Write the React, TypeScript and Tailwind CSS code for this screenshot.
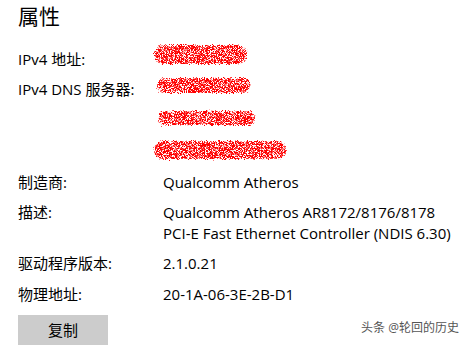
const font = { fontFamily: '"Open Sans", "Noto Sans CJK SC", sans-serif' };

// red marker scribble used to hide the addresses
function Scribble({ w, h, ml, mt, seed }: { w: number; h: number; ml: number; mt: number; seed: number }) {
  const id = `rough-${seed}`;
  return (
    <svg width={w} height={h} style={{ marginLeft: ml, marginTop: mt }} className="block">
      <defs>
        <filter id={id} x="-5%" y="-10%" width="110%" height="120%">
          <feTurbulence type="fractalNoise" baseFrequency="0.9" numOctaves="2" seed={seed} result="t" />
          <feDisplacementMap in="SourceGraphic" in2="t" scale="6" xChannelSelector="R" yChannelSelector="G" result="d" />
          <feTurbulence type="fractalNoise" baseFrequency="1.4" numOctaves="1" seed={seed + 3} result="n" />
          <feColorMatrix
            in="n"
            type="matrix"
            values="0 0 0 0 0  0 0 0 0 0  0 0 0 0 0  0 0 0 -7 4.3"
            result="m"
          />
          <feComposite in="d" in2="m" operator="in" />
        </filter>
      </defs>
      <rect x="2" y="2" width={w - 4} height={h - 4} rx={(h - 4) / 2} fill="#ff0000" filter={`url(#${id})`} />
    </svg>
  );
}

export default function App() {
  return (
    <div className="w-[470px] h-[351px] bg-white relative overflow-hidden text-black pl-[18px]" style={font}>
      {/* Title */}
      <h1 className="text-[21px] leading-[28px] pt-[2px] font-normal">属性</h1>

      <div className="mt-[19px] grid grid-cols-[145px_1fr] text-[15px] leading-[21px]">
        <div>IPv4 地址:</div>
        <div className="h-[21px]">
          <Scribble w={97} h={23} ml={-11} mt={-6} seed={2} />
        </div>

        <div className="mt-[9px]">IPv4 DNS 服务器:</div>
        <div className="mt-[9px] flex flex-col">
          <Scribble w={97} h={19} ml={-8} mt={-3} seed={5} />
          <Scribble w={101} h={18} ml={-7} mt={14} seed={8} />
          <Scribble w={136} h={22} ml={-11} mt={12} seed={11} />
        </div>

        <div className="mt-[11px]">制造商:</div>
        <div className="mt-[11px]">Qualcomm Atheros</div>

        <div className="mt-[9px]">描述:</div>
        <div className="mt-[9px]">
          Qualcomm Atheros AR8172/8176/8178
          <br />
          PCI-E Fast Ethernet Controller (NDIS 6.30)
        </div>

        <div className="mt-[9px]">驱动程序版本:</div>
        <div className="mt-[9px]">2.1.0.21</div>

        <div className="mt-[10px]">物理地址:</div>
        <div className="mt-[10px]">20-1A-06-3E-2B-D1</div>
      </div>

      <button className="mt-[10px] w-[90px] h-[30px] bg-[#cccccc] text-[15px] text-black" style={font}>
        复制
      </button>

      <div className="absolute right-[11px] bottom-[14px] text-[12px] text-[#555]" style={font}>
        头条 @轮回的历史
      </div>
    </div>
  );
}
